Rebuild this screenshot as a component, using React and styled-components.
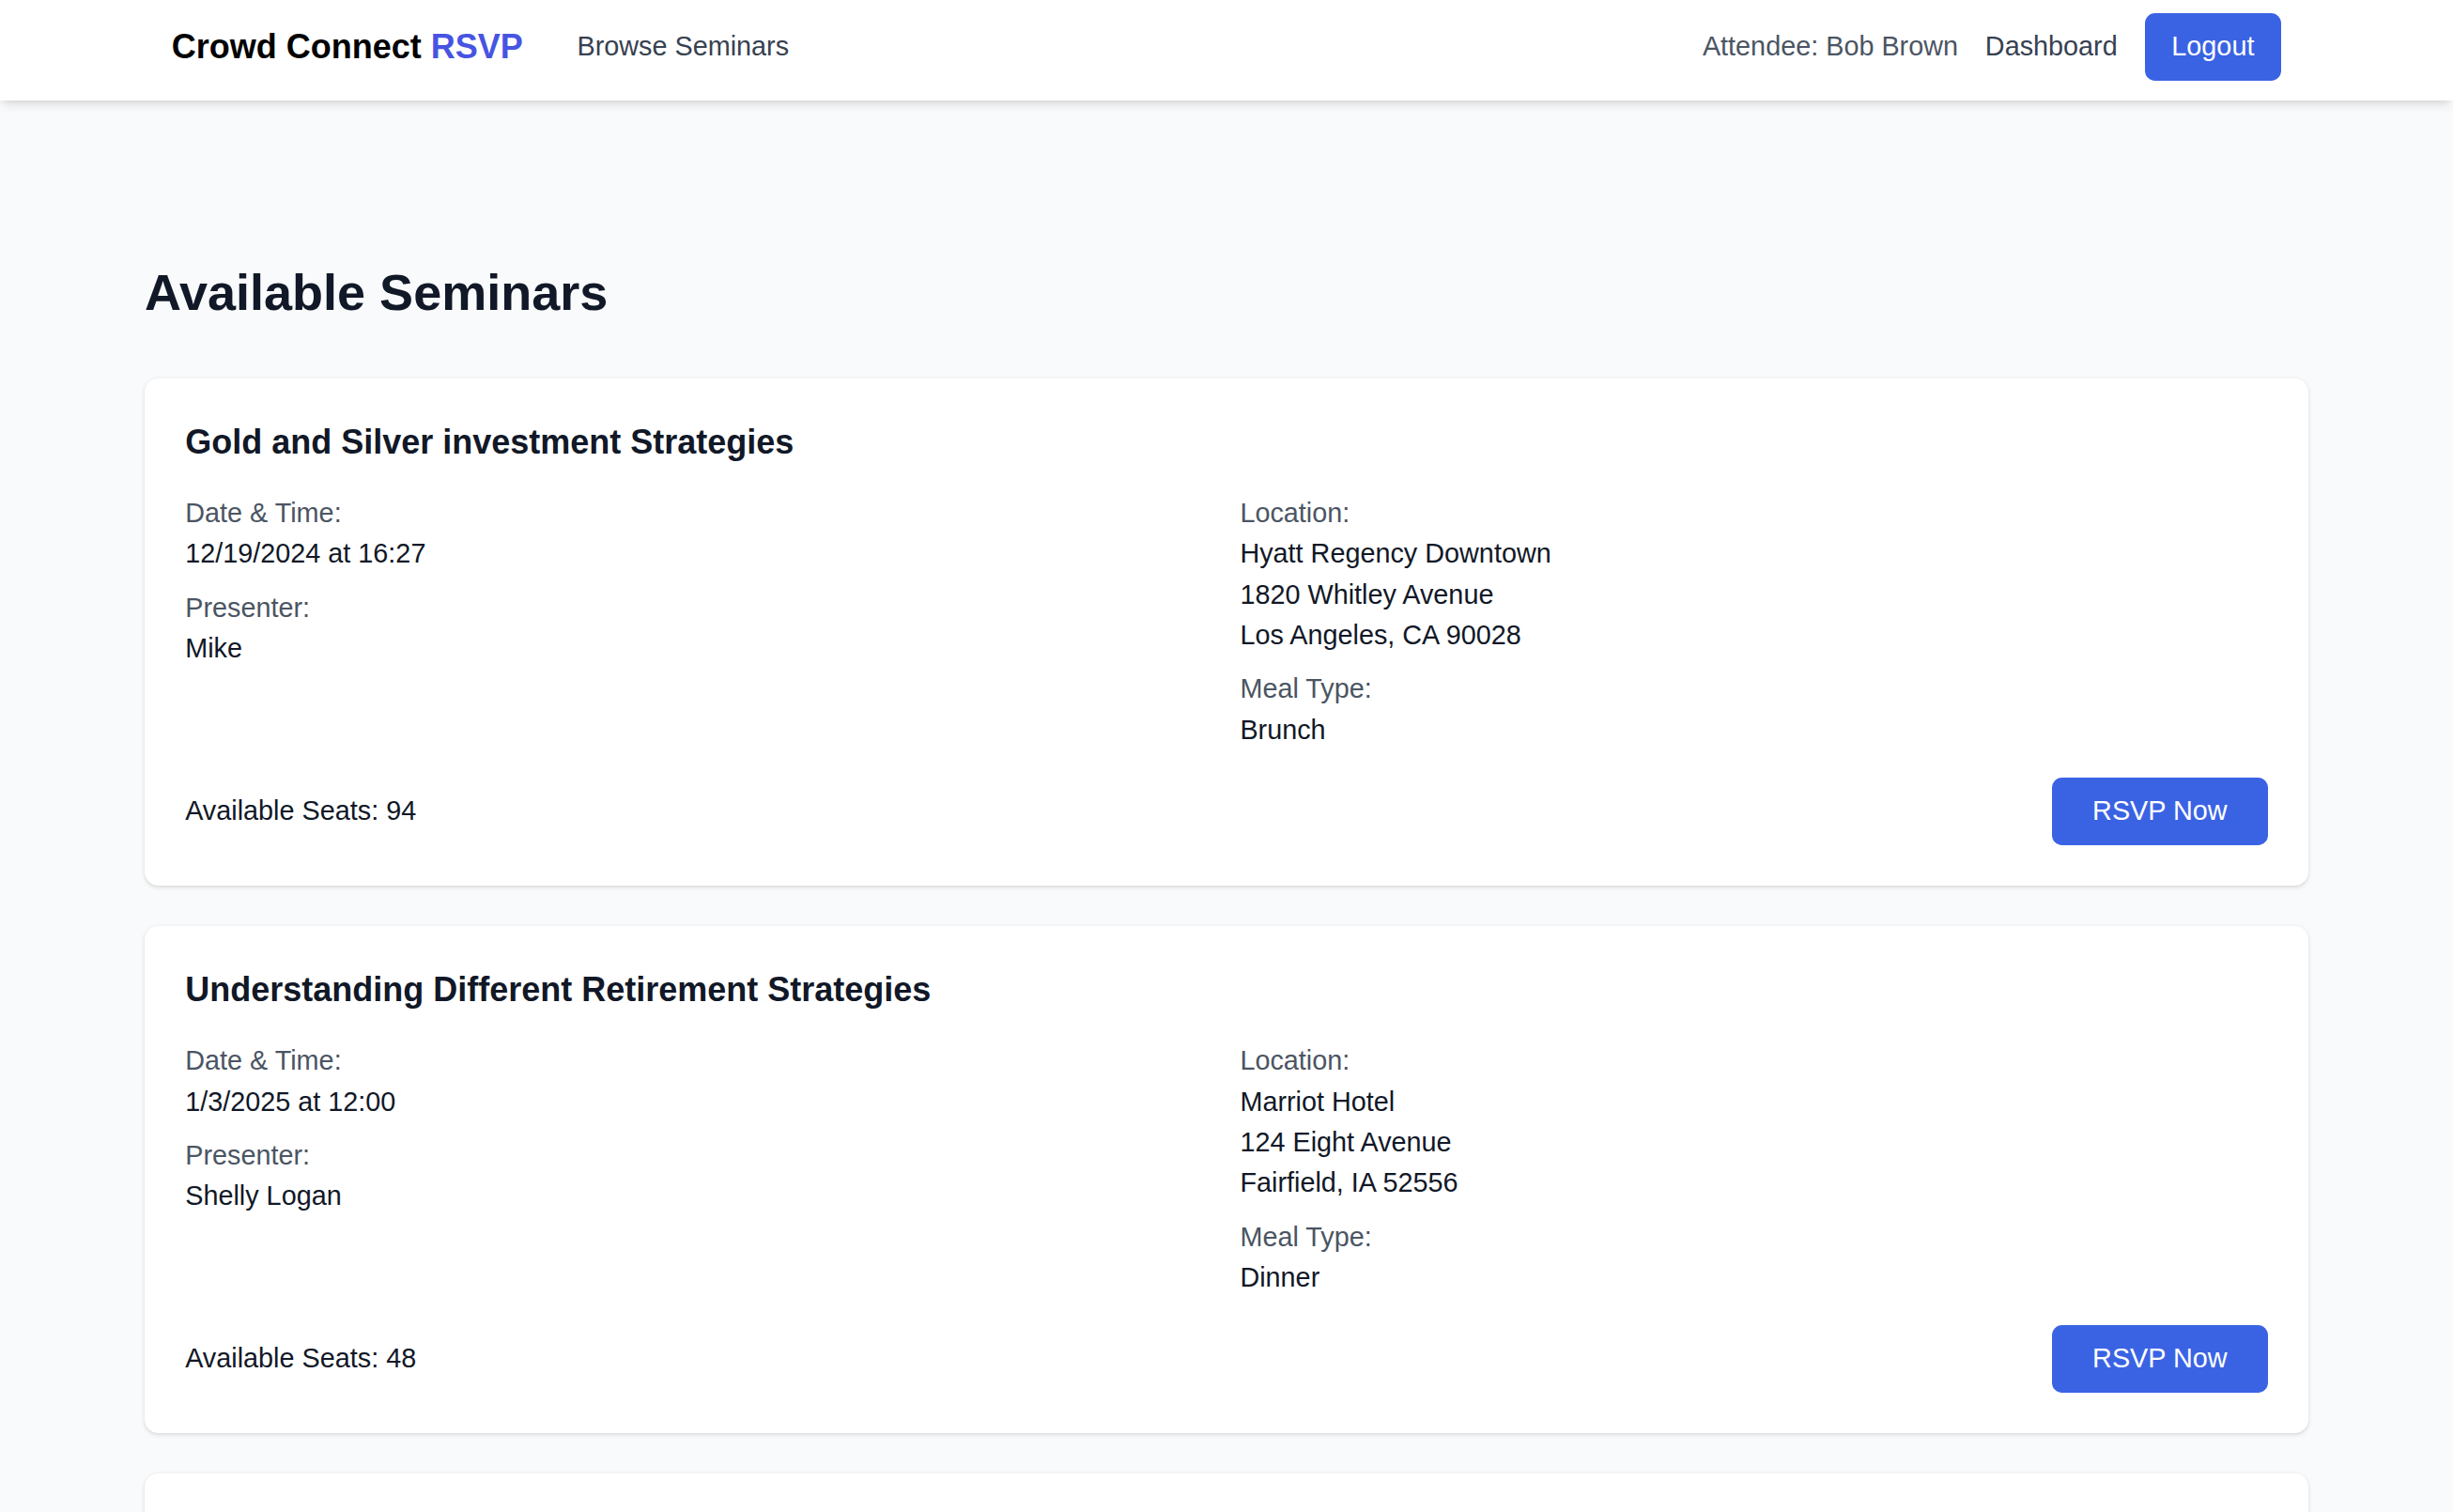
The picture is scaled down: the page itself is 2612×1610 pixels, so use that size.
import React from "react";
import styled, { createGlobalStyle } from "styled-components";

const u = (n) => `${n * 1.8}px`;

const GlobalStyle = createGlobalStyle`
  html, body {
    margin: 0;
    padding: 0;
  }
  body {
    background: #f9fafb;
    font-family: "Liberation Sans", Arial, Helvetica, sans-serif;
    color: #111827;
  }
  * {
    box-sizing: border-box;
  }
`;

const Header = styled.header`
  background: #ffffff;
  box-shadow: 0 ${u(4)} ${u(6)} ${u(-1)} rgba(0, 0, 0, 0.1),
    0 ${u(2)} ${u(4)} ${u(-2)} rgba(0, 0, 0, 0.1);
  position: relative;
  z-index: 1;
`;

const HeaderInner = styled.div`
  max-width: ${u(1280)};
  margin: 0 auto;
  padding: 14px ${u(16)} 21px;
  display: flex;
  justify-content: space-between;
  align-items: center;
`;

const NavGroup = styled.div`
  display: flex;
  align-items: center;
  gap: ${(p) => u(p.$gap)};
`;

const Brand = styled.a`
  font-size: ${u(20)};
  line-height: ${u(28)};
  font-weight: 700;
  color: #000000;
  text-decoration: none;

  span {
    color: #4754e2;
  }
`;

const NavLink = styled.a`
  font-size: ${u(16)};
  line-height: ${u(24)};
  color: ${(p) => (p.$muted ? "#4b5563" : "#374151")};
  text-decoration: none;
  cursor: ${(p) => (p.$muted ? "default" : "pointer")};
`;

const Button = styled.button`
  font-family: inherit;
  font-size: ${u(16)};
  line-height: ${u(24)};
  color: #ffffff;
  background: #3a63e4;
  border: none;
  border-radius: ${u(6)};
  padding: ${u(8)} ${(p) => u(p.$wide ? 24 : 16)};
  cursor: pointer;

  &:hover {
    background: #2f55d4;
  }
`;

const Main = styled.main`
  max-width: ${u(1280)};
  margin: 0 auto;
  padding: 172px 0 ${u(32)};
`;

const PageTitle = styled.h1`
  margin: 0 0 59px;
  font-size: ${u(30)};
  line-height: ${u(36)};
  font-weight: 700;
  color: #111827;
`;

const CardList = styled.div`
  display: flex;
  flex-direction: column;
  gap: ${u(24)};
`;

const Card = styled.article`
  background: #ffffff;
  border-radius: ${u(8)};
  padding: ${u(24)};
  box-shadow: 0 ${u(1)} ${u(3)} 0 rgba(0, 0, 0, 0.1),
    0 ${u(1)} ${u(2)} ${u(-1)} rgba(0, 0, 0, 0.1);
`;

const CardTitle = styled.h2`
  margin: 0 0 ${u(16)};
  font-size: ${u(20)};
  line-height: ${u(28)};
  font-weight: 700;
  color: #111827;
`;

const DetailsGrid = styled.div`
  display: grid;
  grid-template-columns: 1fr 1fr;
  gap: ${u(16)};
`;

const Column = styled.div`
  display: flex;
  flex-direction: column;
  gap: ${u(8)};
`;

const Field = styled.div`
  font-size: ${u(16)};
  line-height: ${u(24)};
`;

const Label = styled.p`
  margin: 0;
  color: #4b5563;
`;

const Value = styled.p`
  margin: 0;
  color: #111827;
`;

const CardFooter = styled.div`
  margin-top: ${u(16)};
  display: flex;
  justify-content: space-between;
  align-items: center;
  font-size: ${u(16)};
  line-height: ${u(24)};
  color: #111827;
`;

const seminars = [
  {
    title: "Gold and Silver investment Strategies",
    date: "12/19/2024 at 16:27",
    presenter: "Mike",
    venue: "Hyatt Regency Downtown",
    street: "1820 Whitley Avenue",
    city: "Los Angeles, CA 90028",
    meal: "Brunch",
    seats: 94,
  },
  {
    title: "Understanding Different Retirement Strategies",
    date: "1/3/2025 at 12:00",
    presenter: "Shelly Logan",
    venue: "Marriot Hotel",
    street: "124 Eight Avenue",
    city: "Fairfield, IA 52556",
    meal: "Dinner",
    seats: 48,
  },
  {
    title: "Estate Planning Essentials",
    date: "1/15/2025 at 18:30",
    presenter: "David Park",
    venue: "Hilton Garden Inn",
    street: "400 Main Street",
    city: "Des Moines, IA 50309",
    meal: "Lunch",
    seats: 60,
  },
];

const SeminarCard = ({ seminar }) => (
  <Card>
    <CardTitle>{seminar.title}</CardTitle>
    <DetailsGrid>
      <Column>
        <Field>
          <Label>Date &amp; Time:</Label>
          <Value>{seminar.date}</Value>
        </Field>
        <Field>
          <Label>Presenter:</Label>
          <Value>{seminar.presenter}</Value>
        </Field>
      </Column>
      <Column>
        <Field>
          <Label>Location:</Label>
          <Value>{seminar.venue}</Value>
          <Value>{seminar.street}</Value>
          <Value>{seminar.city}</Value>
        </Field>
        <Field>
          <Label>Meal Type:</Label>
          <Value>{seminar.meal}</Value>
        </Field>
      </Column>
    </DetailsGrid>
    <CardFooter>
      <span>Available Seats: {seminar.seats}</span>
      <Button $wide>RSVP Now</Button>
    </CardFooter>
  </Card>
);

export default function App() {
  return (
    <>
      <GlobalStyle />
      <Header>
        <HeaderInner>
          <NavGroup $gap={32}>
            <Brand href="#">
              Crowd Connect <span>RSVP</span>
            </Brand>
            <NavLink href="#">Browse Seminars</NavLink>
          </NavGroup>
          <NavGroup $gap={16}>
            <NavLink as="span" $muted>
              Attendee: Bob Brown
            </NavLink>
            <NavLink href="#">Dashboard</NavLink>
            <Button>Logout</Button>
          </NavGroup>
        </HeaderInner>
      </Header>
      <Main>
        <PageTitle>Available Seminars</PageTitle>
        <CardList>
          {seminars.map((s) => (
            <SeminarCard key={s.title} seminar={s} />
          ))}
        </CardList>
      </Main>
    </>
  );
}
